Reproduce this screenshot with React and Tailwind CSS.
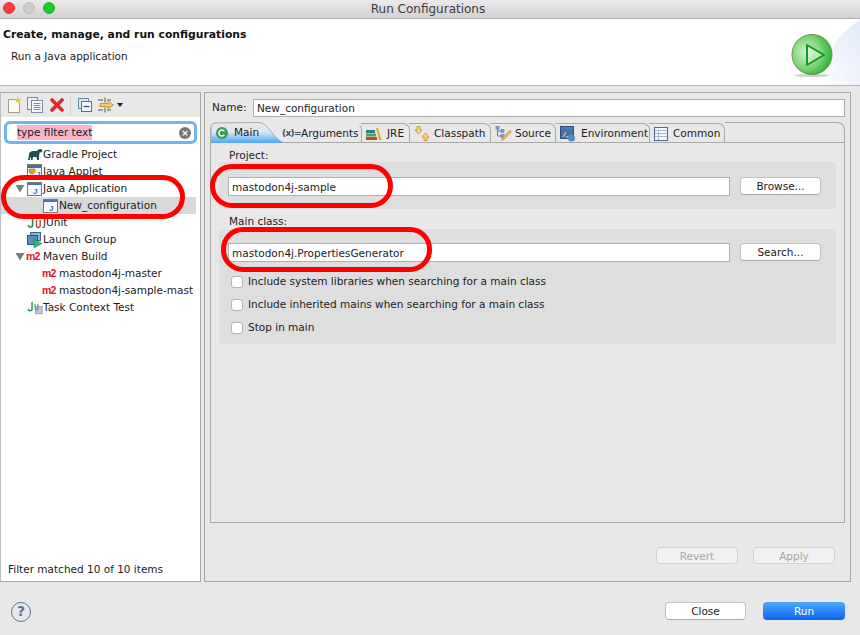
import { Fragment } from "react";

const JavaWindow = () => (
  <svg width="15" height="14" viewBox="0 0 15 14">
    <rect x="0.5" y="0.5" width="14" height="13" fill="#f7f9fd" stroke="#7f7a5c" />
    <rect x="1" y="1" width="13" height="2" fill="#3f78c0" />
    <text x="6" y="11.5" fontSize="8" fontWeight="700" fill="#3a66a8" fontFamily="Liberation Sans">J</text>
  </svg>
);

const Gradle = () => (
  <svg width="16" height="13" viewBox="0 0 16 13">
    <path d="M1 12 L2 7 C2 4 4 3 7 3 L10 3 C11 1 14 0 15 2 C16 4 14 5 13 4 C12 6 12 9 12 12 L10 12 L9.5 9 L6 9 L5.5 12 L4 12 L4 9 L3 10 L3 12 Z" fill="#1f4f55" />
  </svg>
);

const Applet = () => (
  <svg width="16" height="15" viewBox="0 0 16 15">
    <rect x="0.5" y="0.5" width="14" height="13" fill="#f4f6fb" stroke="#7f7a5c" />
    <rect x="1" y="1" width="13" height="3" fill="#3b6fb5" />
    <path d="M2 5 L8 5 L8 8 L6 10 L4 10 L2 8 Z" fill="#e2a51f" stroke="#9a6a10" strokeWidth="0.5" />
    <text x="9.5" y="12.5" fontSize="7" fontWeight="700" fill="#3a66a8" fontFamily="Liberation Sans">J</text>
  </svg>
);

const JUnit = () => (
  <svg width="17" height="14" viewBox="0 0 17 14">
    <path d="M6 1 L6 9 C6 12 1.5 12 1.5 9" fill="none" stroke="#2f8f4e" strokeWidth="1.7" />
    <path d="M10 4 L10 10 C10 12.5 14 12.5 14 10 L14 4" fill="none" stroke="#c8403a" strokeWidth="1.5" />
  </svg>
);

const LaunchGroup = () => (
  <svg width="16" height="16" viewBox="0 0 16 16">
    <rect x="3.5" y="0.5" width="10" height="8" fill="#8fb2d8" stroke="#3c6790" />
    <rect x="0.5" y="3.5" width="10" height="9" fill="#5a8cbd" stroke="#2d5a85" />
    <path d="M7 7 L15 11.5 L7 16 Z" fill="#38b46a" stroke="#1f7f49" strokeWidth="0.5" />
  </svg>
);

const TaskTest = () => (
  <svg width="19" height="16" viewBox="0 0 19 16">
    <rect x="10" y="6" width="8" height="9" fill="#c7c0e0" stroke="#8a80b5" strokeWidth="0.7" />
    <path d="M6 1 L6 9 C6 12 1.5 12 1.5 9" fill="none" stroke="#2f8f4e" strokeWidth="1.7" />
    <path d="M9.5 3 L9.5 8 C9.5 11 13 11 13 8 L13 3" fill="none" stroke="#4d8f72" strokeWidth="1.3" />
  </svg>
);

const M2 = () => (
  <span className="text-[#e8121a] font-bold text-[10.5px] leading-none w-[15px] -ml-[1px] tracking-[-0.8px]" style={{ fontFamily: "Liberation Sans" }}>m2</span>
);

const Expander = () => (
  <svg width="10" height="9" viewBox="0 0 10 9">
    <path d="M0.5 1 L9.5 1 L5 8.5 Z" fill="#7d7d7d" />
  </svg>
);

const treeRows = [
  { indent: 27, icon: <Gradle />, label: "Gradle Project" },
  { indent: 27, icon: <Applet />, label: "Java Applet" },
  { indent: 27, icon: <JavaWindow />, label: "Java Application", open: true },
  { indent: 43, icon: <JavaWindow />, label: "New_configuration", selected: true },
  { indent: 27, icon: <JUnit />, label: "JUnit" },
  { indent: 27, icon: <LaunchGroup />, label: "Launch Group" },
  { indent: 27, icon: <M2 />, label: "Maven Build", open: true },
  { indent: 43, icon: <M2 />, label: "mastodon4j-master" },
  { indent: 43, icon: <M2 />, label: "mastodon4j-sample-mast" },
  { indent: 27, icon: <TaskTest />, label: "Task Context Test" },
];

const ToolbarIcons = () => (
  <div className="flex items-center h-[24px] pl-[6px]">
    <svg width="15" height="16" viewBox="0 0 15 16">
      <path d="M1.5 2.5 L9 2.5 L12.5 6 L12.5 15.5 L1.5 15.5 Z" fill="#fbfbf4" stroke="#a0a08a" />
      <path d="M11 0 L12 2 L14.5 2.5 L12.5 4 L13 6 L11 5 L9 6 L9.5 4 L8 2.5 L10 2 Z" fill="#e8c64a" />
    </svg>
    <svg className="ml-[5px]" width="16" height="16" viewBox="0 0 16 16">
      <rect x="0.5" y="0.5" width="10" height="12" fill="#eef1f7" stroke="#7d8aa6" />
      <rect x="4.5" y="3.5" width="11" height="12" fill="#f8f9fc" stroke="#7d8aa6" />
      <path d="M6.5 6.5 H13.5 M6.5 8.5 H13.5 M6.5 10.5 H13.5 M6.5 12.5 H13.5" stroke="#6f8fc0" />
    </svg>
    <svg className="ml-[7px]" width="14" height="14" viewBox="0 0 14 14">
      <path d="M2 2 L12 12 M12 2 L2 12" stroke="#de2a2a" strokeWidth="3.6" strokeLinecap="round" />
    </svg>
    <div className="ml-[6px] mr-[7px] w-px h-[19px] bg-[#d4d4d4]" />
    <svg width="14" height="14" viewBox="0 0 14 14">
      <rect x="0.5" y="0.5" width="10" height="10" fill="#dfe6f2" stroke="#6d86ad" />
      <rect x="3.5" y="3.5" width="10" height="10" fill="#f3f6fb" stroke="#55729f" />
      <path d="M5.5 8.5 H11.5" stroke="#304f80" strokeWidth="1.2" />
    </svg>
    <svg className="ml-[6px]" width="17" height="16" viewBox="0 0 17 16">
      <path d="M0 3 H5 M9 3 H13 M0 13 H5 M9 13 H13 M7 0.5 V5.5 M7 10.5 V15.5" stroke="#555" />
      <path d="M2 6.5 H10 V4.5 L15.5 8 L10 11.5 V9.5 H2 Z" fill="#f3cf74" stroke="#b9861f" strokeWidth="0.8" />
    </svg>
    <svg className="ml-[2px]" width="6" height="4" viewBox="0 0 6 4">
      <path d="M0 0 H6 L3 4 Z" fill="#222" />
    </svg>
  </div>
);

const LeftPanel = () => (
  <div className="w-[201px] h-full flex flex-col border border-[#a6a6a6] border-l-[#bdbdbd]">
    <ToolbarIcons />
    <div className="flex-1 bg-white flex flex-col min-h-0">
      <div className="mx-[6px] mt-[7px] h-[17px] bg-white rounded-[3px] shadow-[0_0_0_3px_#72b4f2] flex items-center justify-between pl-[10px] pr-[3px]">
        <span className="bg-[#f7b5cc] leading-[15px]">type filter text</span>
        <span className="w-[12px] h-[12px] rounded-full bg-[#777] text-white text-[9px] leading-[12px] text-center font-bold">×</span>
      </div>
      <div className="mt-[5px] w-[195px] overflow-hidden flex flex-col">
        {treeRows.map((row) => (
          <Fragment key={row.label}>
            <div className={`h-[17px] flex items-center whitespace-nowrap relative ${row.selected ? "bg-[#d9d9d9]" : ""}`} style={{ paddingLeft: row.indent - 1 }}>
              {row.open && (
                <span className="absolute left-[14px] top-[4px] leading-none"><Expander /></span>
              )}
              <span className="w-[16px] flex items-center shrink-0">{row.icon}</span>
              <span className="pt-[1px]">{row.label}</span>
            </div>
          </Fragment>
        ))}
      </div>
      <div className="mt-auto pl-[7px] pb-[4px] h-[19px] leading-[15px]">Filter matched 10 of 10 items</div>
    </div>
  </div>
);

const tabs = [
  { label: "Arguments", width: 82, inset: 2, icon: <span className="w-[19px] text-[#44506a] text-[9px] font-bold whitespace-nowrap tracking-[-0.7px]">(x)=</span> },
  {
    label: "JRE",
    width: 49,
    inset: 5,
    icon: (
      <svg className="mr-[5px]" width="16" height="14" viewBox="0 0 16 14">
        <rect x="0" y="3" width="9" height="3" fill="#2e7d8f" />
        <rect x="0" y="6.5" width="10" height="3" fill="#5a9f4a" />
        <rect x="0" y="10" width="11" height="3" fill="#b5562a" />
        <path d="M10 1 L12 1 L15.5 13 L13 13 Z" fill="#e8a92e" />
      </svg>
    ),
  },
  {
    label: "Classpath",
    width: 82,
    inset: 5,
    icon: (
      <svg className="mr-[4px]" width="16" height="15" viewBox="0 0 16 15">
        <path d="M3 0.5 H6 V4 H8 L4.5 8 L1 4 H3 Z" fill="#f4d97e" stroke="#b98a22" strokeWidth="0.8" />
        <path d="M10 14.5 H13 V11 H15 L11.5 7 L8 11 H10 Z" fill="#f4d97e" stroke="#b98a22" strokeWidth="0.8" />
      </svg>
    ),
  },
  {
    label: "Source",
    width: 66,
    inset: 5,
    icon: (
      <svg className="mr-[3px]" width="17" height="15" viewBox="0 0 17 15">
        <path d="M2.5 1 V10 M2.5 5 H6 M2.5 10 H6" stroke="#5b7fb0" />
        <rect x="1" y="0" width="3" height="3" fill="#8fa8cc" stroke="#4f6f9f" strokeWidth="0.6" />
        <rect x="6" y="3.5" width="3" height="3" fill="#8fa8cc" stroke="#4f6f9f" strokeWidth="0.6" />
        <rect x="6" y="8.5" width="3" height="3" fill="#8fa8cc" stroke="#4f6f9f" strokeWidth="0.6" />
        <path d="M15 4 L16.5 5.5 L9 13.5 L6.5 14.5 L7.5 12 Z" fill="#e8b95a" stroke="#a8792a" strokeWidth="0.5" />
      </svg>
    ),
  },
  {
    label: "Environment",
    width: 95,
    inset: 5,
    icon: (
      <svg className="mr-[5px]" width="16" height="16" viewBox="0 0 16 16">
        <rect x="0.5" y="0.5" width="13" height="12" fill="#4d6e94" stroke="#2f4f78" />
        <rect x="1" y="1" width="12" height="2.5" fill="#3c7fc4" />
        <path d="M3 11 L6 6 M6 11 H9" stroke="#dfe8f2" />
        <circle cx="11.5" cy="12" r="3.5" fill="#4a8ec9" />
      </svg>
    ),
  },
  {
    label: "Common",
    width: 76,
    inset: 5,
    icon: (
      <svg className="mr-[5px]" width="14" height="14" viewBox="0 0 14 14">
        <rect x="0.5" y="0.5" width="13" height="13" fill="#f5f6fa" stroke="#55698f" />
        <path d="M1 3.5 H13 M1 6.5 H13 M1 9.5 H13 M4.5 3 V13" stroke="#a9b6cf" />
      </svg>
    ),
  },
];

const Tabs = () => (
  <div className="h-[21px] flex border-b border-[#a9a9a9]">
    <div className="w-[70px] h-[21px] relative flex items-center pl-[5px] pt-px shrink-0">
      <svg className="absolute left-0 top-0" width="76" height="21" viewBox="0 0 76 21">
        <defs>
          <linearGradient id="activeTab" x1="0" y1="0" x2="0" y2="1">
            <stop offset="0" stopColor="#e9e9e9" />
            <stop offset="0.45" stopColor="#dfe7f0" />
            <stop offset="1" stopColor="#4da3f8" />
          </linearGradient>
        </defs>
        <path d="M0 21 V6 Q0 1 5 1 L48 0.5 C58 1 62 18 74 21 Z" fill="url(#activeTab)" />
        <path d="M0 21 V6 Q0 1 5 1 L48 0.5 C58 1 62 18 74 21" fill="none" stroke="#a9a9a9" />
      </svg>
      <svg className="relative mr-[6px]" width="12" height="12" viewBox="0 0 12 12">
        <circle cx="6" cy="6" r="6" fill="#2f9e52" />
        <path d="M8.3 4.2 A3 3 0 1 0 8.3 7.8" fill="none" stroke="#fff" strokeWidth="1.6" />
      </svg>
      <span className="relative">Main</span>
    </div>
    {tabs.map((tab, i) => (
      <div
        key={tab.label}
        className={`h-[20px] mt-px -ml-px flex items-center border-t border-r border-r-[#a9a9a9] rounded-tr-[7px] shrink-0 ${i === 0 ? "border-t-transparent" : "border-t-[#a9a9a9]"}`}
        style={{ width: tab.width, paddingLeft: tab.inset }}
      >
        {tab.icon}
        <span>{tab.label}</span>
      </div>
    ))}
    <div className="flex-1 border-t border-r border-[#a9a9a9] rounded-tr-[8px]" />
  </div>
);

const Button = ({ children, className = "" }) => (
  <button className={`w-[81px] h-[18px] bg-white rounded-[4px] border border-[#c0c0c0] border-b-[#a8a8a8] leading-[15px] text-[#222] ${className}`}>
    {children}
  </button>
);

const TextBox = ({ value }) => (
  <div className="w-[502px] h-[19px] bg-white border border-[#b0b0b0] pl-[3px] leading-[19px] whitespace-nowrap">{value}</div>
);

const Checkbox = ({ label }) => (
  <div className="h-[23px] flex items-center">
    <span className="w-[12px] h-[12px] bg-white border border-[#b4b4b4] rounded-[3px] mr-[5px]" />
    <span>{label}</span>
  </div>
);

const RightPanel = () => (
  <div className="w-[647px] h-full ml-[3px] border border-[#a6a6a6] flex flex-col px-[5px]">
    <div className="flex items-center h-[18px] mt-[5px] pl-[2px] pt-[1px]">
      <span className="w-[41px]">Name:</span>
      <div className="w-[592px] h-[18px] bg-white border border-[#b0b0b0] pl-[3px] leading-[16px]">New_configuration</div>
    </div>
    <div className="mt-[6px] w-[635px] h-[401px] border-l border-b border-[#a9a9a9] rounded-tl-[7px] flex flex-col">
      <Tabs />
      <div className="flex-1 border-r border-[#a9a9a9] pl-[18px] flex flex-col relative">
        <div className="h-[18px] mt-px leading-[22px]">Project:</div>
        <div className="-ml-[10px] mr-[8px] h-[47px] bg-[#dedede] rounded-[3px] flex items-start pl-[9px] pt-[15px]">
          <TextBox value="mastodon4j-sample" />
          <Button className="ml-[10px]">Browse...</Button>
        </div>
        <div className="h-[20px] leading-[25px]">Main class:</div>
        <div className="-ml-[10px] mr-[8px] h-[115px] bg-[#dedede] rounded-[3px] flex flex-col pl-[9px] pt-[14px]">
          <div className="flex items-start">
            <TextBox value="mastodon4j.PropertiesGenerator" />
            <Button className="ml-[10px]">Search...</Button>
          </div>
          <div className="mt-[8px] pl-[3px] flex flex-col">
            <Checkbox label="Include system libraries when searching for a main class" />
            <Checkbox label="Include inherited mains when searching for a main class" />
            <Checkbox label="Stop in main" />
          </div>
        </div>
      </div>
    </div>
    <div className="flex justify-end gap-[15px] pr-[10px] mt-[24px]">
      <button className="w-[82px] h-[17px] bg-[#f1f1f1] rounded-[4px] border border-[#d2d2d2] text-[#a5a5a5] leading-[17px]">Revert</button>
      <button className="w-[82px] h-[17px] bg-[#f1f1f1] rounded-[4px] border border-[#d2d2d2] text-[#a5a5a5] leading-[17px]">Apply</button>
    </div>
  </div>
);

const Banner = () => (
  <svg width="90" height="66" viewBox="0 0 90 66" className="shrink-0">
    <defs>
      <linearGradient id="arc" x1="0" y1="1" x2="1" y2="0">
        <stop offset="0" stopColor="#ffffff" />
        <stop offset="0.5" stopColor="#eef2fb" />
        <stop offset="1" stopColor="#e3eaf8" />
      </linearGradient>
      <radialGradient id="ball" cx="0.35" cy="0.45" r="0.75">
        <stop offset="0" stopColor="#d2efce" />
        <stop offset="0.5" stopColor="#7ed67a" />
        <stop offset="1" stopColor="#12a41e" />
      </radialGradient>
      <linearGradient id="tri" x1="0" y1="0" x2="1" y2="1">
        <stop offset="0" stopColor="#e8f9e5" />
        <stop offset="1" stopColor="#8fe08a" />
      </linearGradient>
    </defs>
    <path d="M50 66 C54 35 70 12 90 1 V66 Z" fill="url(#arc)" />
    <ellipse cx="42" cy="56.5" rx="17" ry="1.6" fill="#d0d0d0" />
    <circle cx="42" cy="35.5" r="20" fill="url(#ball)" stroke="#6f8f50" />
    <path d="M37 26 L54 36 L37 46 Z" fill="url(#tri)" stroke="#159a20" strokeWidth="2" strokeLinejoin="round" />
  </svg>
);

export default function App() {
  return (
    <div className="w-[860px] h-[635px] relative overflow-hidden flex flex-col bg-[#e8e8e8] text-[10.5px] text-[#1c1c1c]" style={{ fontFamily: '"DejaVu Sans", sans-serif' }}>
      <div className="h-[19px] bg-gradient-to-b from-[#ebe9eb] to-[#d3d1d3] border-b border-[#b1b1b1] flex items-center justify-center relative text-[12px] text-[#3c3c3c] shrink-0 pr-[4px]">
        <div className="absolute left-[3px] top-[2px] flex gap-[8px]">
          <span className="w-[12px] h-[12px] rounded-full bg-[#fc3b3c] border border-[#e2383a]" />
          <span className="w-[12px] h-[12px] rounded-full bg-[#cdcdcd] border border-[#bcbcbc]" />
          <span className="w-[12px] h-[12px] rounded-full bg-[#1ecb2e] border border-[#1bb528]" />
        </div>
        Run Configurations
      </div>
      <div className="h-[67px] bg-white border-b border-[#b4b4b4] flex justify-between shrink-0">
        <div className="pl-[3px] pt-[8px]">
          <div className="text-[10.8px] font-bold text-[#111] leading-[16px]">Create, manage, and run configurations</div>
          <div className="pl-[8px] mt-[5px] leading-[16px]">Run a Java application</div>
        </div>
        <Banner />
      </div>
      <div className="h-[496px] pt-[6px] flex shrink-0">
        <LeftPanel />
        <RightPanel />
      </div>
      <div className="flex-1 flex items-start justify-between pl-[11px] pr-[15px] pt-[20px]">
        <span className="w-[20px] h-[20px] rounded-full border-[1.5px] border-[#5b6f96] text-[#5b6f96] font-bold text-[14px] leading-[17px] text-center">?</span>
        <div className="flex gap-[17px]">
          <Button>Close</Button>
          <button className="w-[82px] h-[18px] rounded-[4px] bg-gradient-to-b from-[#4ea6fb] to-[#0a62f5] text-white leading-[15px]">Run</button>
        </div>
      </div>
      <div className="absolute left-[1px] top-[175px] w-[184px] h-[44px] border-[5px] border-[#fe0000] rounded-[22px]" />
      <div className="absolute left-[210px] top-[164px] w-[183px] h-[44px] border-[5px] border-[#fe0000] rounded-[22px]" />
      <div className="absolute left-[221px] top-[227px] w-[211px] h-[45px] border-[5px] border-[#fe0000] rounded-[22px]" />
    </div>
  );
}
